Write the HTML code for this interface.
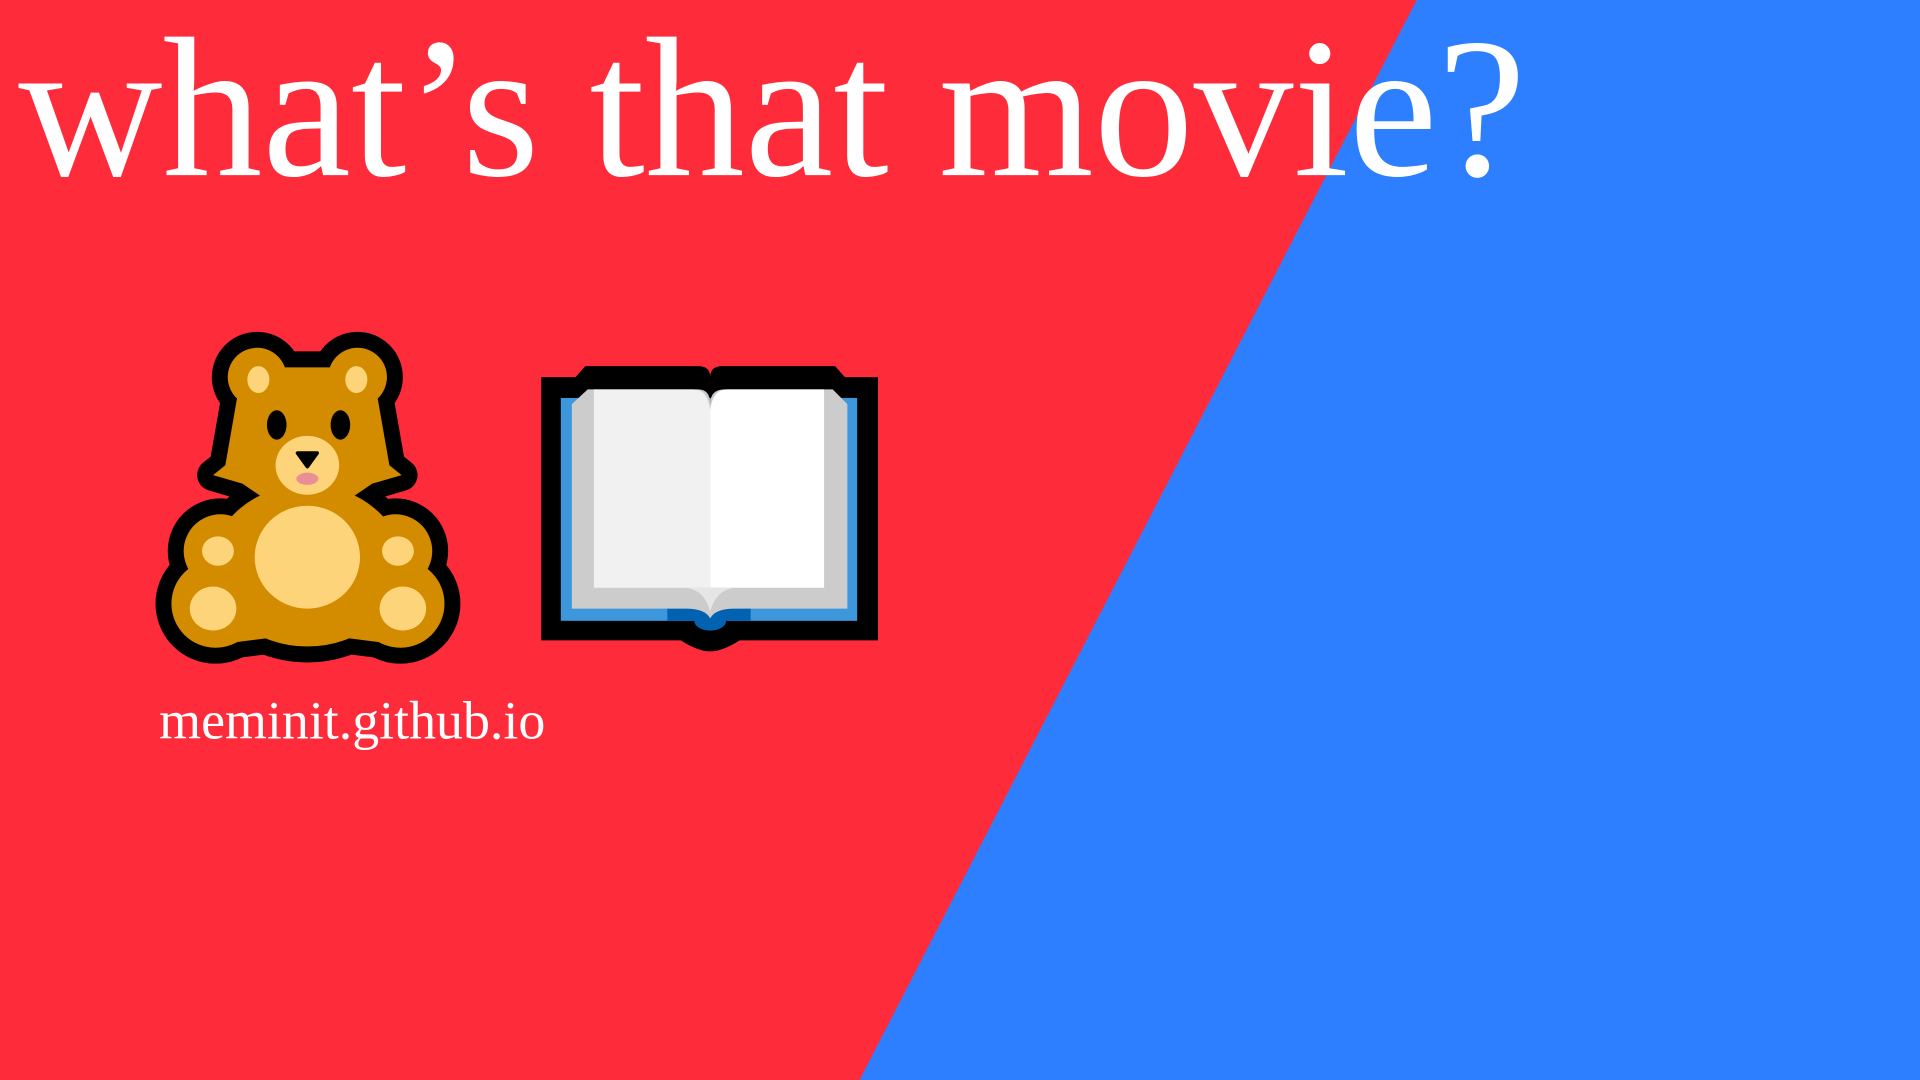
<!DOCTYPE html>
<html><head><meta charset="utf-8"><style>
html,body{margin:0;padding:0;width:1920px;height:1080px;overflow:hidden;background:#fe2c3a}
#s{position:absolute;left:0;top:0;width:1568px;height:882px;transform:scale(1.22449);transform-origin:0 0}
.t{position:absolute;font-family:"Liberation Serif",serif;color:#fff;white-space:nowrap;line-height:1}
</style></head><body><div id="s">
<svg width="1568" height="882" style="position:absolute;left:0;top:0">
<rect width="1568" height="882" fill="#fe2c3a"/>
<polygon points="1157,0 1568,0 1568,882 702,882" fill="#2d7fff"/>
<!-- bear -->
<g stroke="#000" stroke-width="26" stroke-linejoin="round" fill="#000">
<circle cx="210" cy="308" r="24"/><circle cx="292" cy="308" r="24"/>
<polygon points="198,300 304,300 318,380 328,388 304,395 282,410 220,410 198,395 174,388 184,380"/>
<ellipse cx="251" cy="462" rx="78" ry="66"/>
<circle cx="180" cy="450" r="30"/><circle cx="323" cy="450" r="30"/>
<circle cx="176" cy="493" r="36"/><circle cx="327" cy="493" r="36"/>
<polygon points="176,470 327,470 322,526 275,520 228,520 180,526"/>
</g>
<g fill="#d38b00">
<circle cx="210" cy="308" r="24"/><circle cx="292" cy="308" r="24"/>
<polygon points="198,300 304,300 318,380 328,388 304,395 282,410 220,410 198,395 174,388 184,380"/>
<ellipse cx="251" cy="462" rx="78" ry="66"/>
<circle cx="180" cy="450" r="30"/><circle cx="323" cy="450" r="30"/>
<circle cx="176" cy="493" r="36"/><circle cx="327" cy="493" r="36"/>
<polygon points="176,470 327,470 322,526 275,520 228,520 180,526"/>
</g>
<g fill="#fed47a">
<ellipse cx="211" cy="310" rx="9" ry="11"/><ellipse cx="291" cy="310" rx="9" ry="11"/>
<ellipse cx="251" cy="380" rx="26" ry="24"/>
<ellipse cx="251" cy="455" rx="43" ry="42"/>
<ellipse cx="178" cy="450" rx="13" ry="12"/><ellipse cx="325" cy="450" rx="13" ry="12"/>
<ellipse cx="174" cy="497" rx="19" ry="18"/><ellipse cx="329" cy="497" rx="19" ry="18"/>
</g>
<ellipse cx="226" cy="347" rx="8" ry="12" fill="#000"/><ellipse cx="278" cy="347" rx="8" ry="12" fill="#000"/>
<polygon points="243,370 259,370 251,381" fill="#000" stroke="#000" stroke-width="3" stroke-linejoin="round"/>
<ellipse cx="251" cy="391" rx="9" ry="5" fill="#e88f95"/>
<!-- book -->
<path d="M442,308 H470 L478,299 H570 Q580,299 580,308 Q580,299 590,299 H682 L690,308 H717 V523 H604 Q590,532 580,532 Q570,532 556,523 H442 Z" fill="#000"/>
<rect x="458" y="325" width="242" height="182" fill="#3d97dd"/>
<rect x="545" y="497" width="68" height="10" fill="#0062b1"/>
<ellipse cx="580" cy="507" rx="13" ry="8" fill="#0062b1"/>
<path d="M467,330 L480,318 H570 Q580,318 580,330 Q580,318 592,318 H680 L692,330 V497 H600 Q584,497 580,505 Q576,497 560,497 H467 Z" fill="#cccccc"/>
<path d="M485,318 H566 Q578,318 580,335 V480 H485 Z" fill="#f1f1f1"/>
<path d="M580,335 Q582,318 594,318 H673 V480 H580 Z" fill="#ffffff"/>
<path d="M560,480 Q576,482 580,500 Q584,482 600,480 Z" fill="#e6e6e6"/>
</svg>
<div class="t" style="left:15px;top:8px;font-size:163px;height:170px"><span style="position:absolute;left:0;top:0">what’s that movie?</span></div>
<div class="t" style="left:130px;top:567px;font-size:44px">meminit.github.io</div>
</div></body></html>
